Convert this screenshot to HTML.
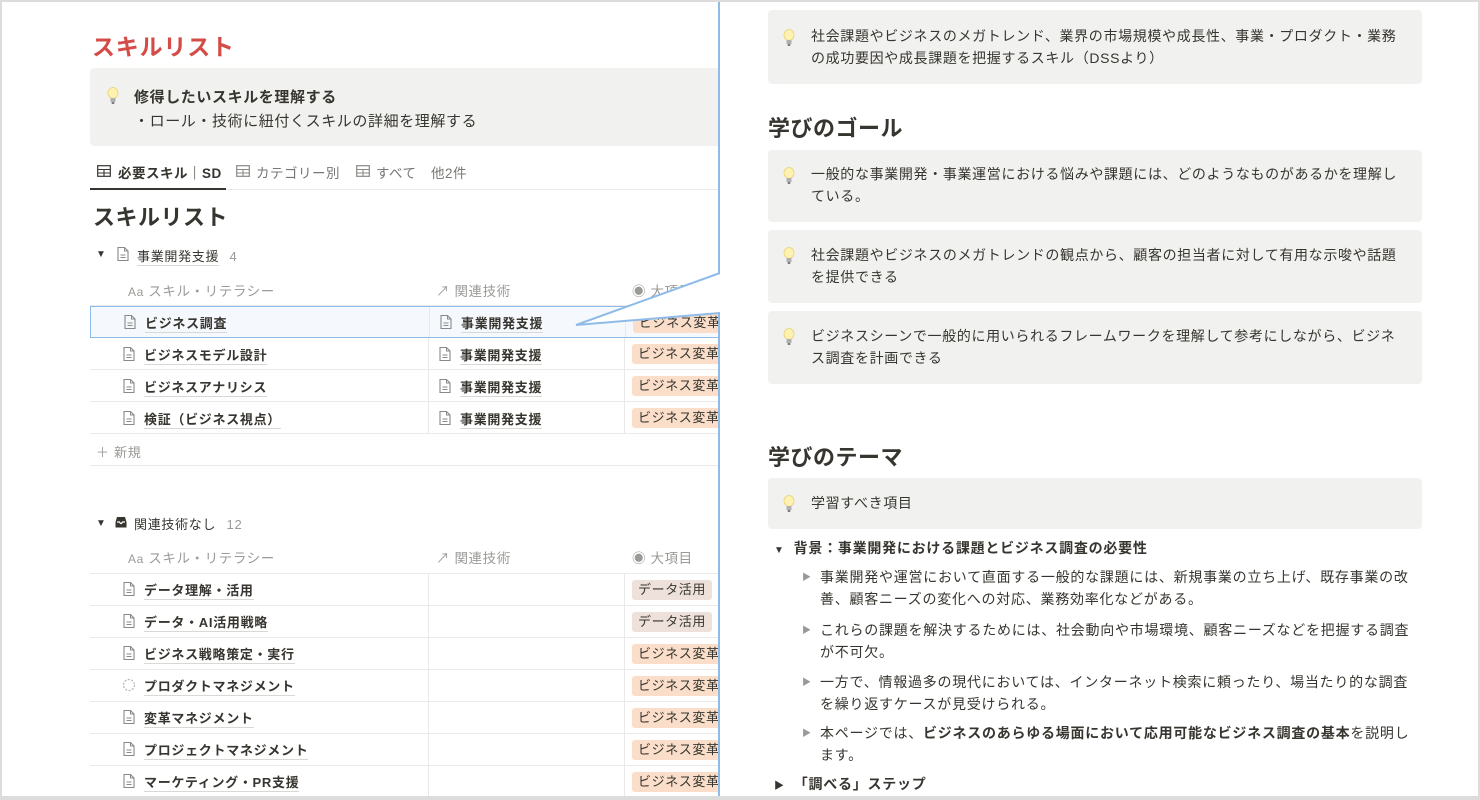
<!DOCTYPE html>
<html><head><meta charset="utf-8">
<style>
*{margin:0;padding:0;box-sizing:border-box}
body{width:1480px;height:800px;overflow:hidden;background:#fff;font-family:"Liberation Sans","Noto Sans CJK JP",sans-serif;color:#37352f;position:relative}
.a{position:absolute;white-space:nowrap}
#frame{position:absolute;left:0;top:0;width:1480px;height:800px;border:2px solid #dcdcdc;border-bottom:4px solid #dcdcdc;pointer-events:none;z-index:20}
#left{position:absolute;left:0;top:0;width:718px;height:800px;overflow:hidden}
.callout{position:absolute;background:#f1f1ef;border-radius:4px}
.t13{font-size:13px;letter-spacing:0.7px}
.row{position:absolute;left:90px;width:700px;height:32px;border-bottom:1px solid #e9e9e7}
.c1{position:absolute;left:338px;top:0;height:100%;border-left:1px solid #e9e9e7}
.c2{position:absolute;left:534px;top:0;height:100%;border-left:1px solid #e9e9e7}
.ul{border-bottom:1px solid #d8d8d5;font-weight:bold;padding-bottom:1px}
.tag{position:absolute;left:542px;top:6px;height:20px;padding:0 6px;border-radius:3px;font-size:13px;letter-spacing:0.6px;line-height:20px;width:120px}
.biz{background:#fadec9}
.dat{background:#eee0da}
#right{position:absolute;left:718px;top:0;width:762px;height:800px;background:#fff;border-left:2px solid #8fbbe8}
.rc{position:absolute;left:48px;width:654px;background:#f1f1ef;border-radius:4px}
.rt{position:absolute;left:43px;font-size:14px;letter-spacing:0.65px;line-height:22px;white-space:nowrap}
.bulb{position:absolute;width:12px;height:18px}
h2{position:absolute;left:48px;font-size:22px;font-weight:bold;letter-spacing:0.5px}
.li{position:absolute;left:100px;font-size:14px;letter-spacing:0.75px;line-height:22px;white-space:nowrap}
.tri{position:absolute;left:-18px;top:0;font-size:9px;color:#999}
</style></head><body>
<svg width="0" height="0" style="position:absolute">
<defs>
<symbol id="doc" viewBox="0 0 14 16"><path d="M2 1.5h6.5l3.5 3.5v9.5H2z" fill="none" stroke="#8a8985" stroke-width="1.1"/><path d="M8.5 1.5v3.5H12M4.5 9h5M4.5 11.5h5" fill="none" stroke="#8a8985" stroke-width="1"/></symbol>
<symbol id="bulb" viewBox="0 0 12 18"><ellipse cx="6" cy="6" rx="5" ry="5.5" fill="#fff2b0" stroke="#e6d27a" stroke-width="0.8"/><rect x="3.5" y="11" width="5" height="4" fill="#b0b0b0"/><rect x="4.5" y="15" width="3" height="2" rx="1" fill="#777"/></symbol>
<symbol id="tbl" viewBox="0 0 14 12"><rect x="0.7" y="0.7" width="12.6" height="10.6" fill="none" stroke="currentColor" stroke-width="1.2"/><path d="M0.7 4.5h12.6M0.7 8h12.6M7 4.5v7" stroke="currentColor" stroke-width="1.1"/></symbol>
</defs></svg>

<div id="left">
<div class="a" style="left:92px;top:28px;font-size:23px;font-weight:bold;color:#d44c47;letter-spacing:0.8px">スキルリスト</div>
<div class="callout" style="left:90px;top:68px;width:700px;height:78px"></div>
<svg class="bulb" style="left:107px;top:87px"><use href="#bulb"/></svg>
<div class="a" style="left:134px;top:86px;font-size:15px;font-weight:bold;letter-spacing:0.6px">修得したいスキルを理解する</div>
<div class="a" style="left:134px;top:110px;font-size:15px;letter-spacing:0.6px">・ロール・技術に紐付くスキルの詳細を理解する</div>

<svg class="a" style="left:97px;top:165px;color:#37352f" width="14" height="12"><use href="#tbl"/></svg>
<div class="a" style="left:118px;top:162px;font-size:13.5px;letter-spacing:0.5px;font-weight:bold">必要スキル｜SD</div>
<svg class="a" style="left:236px;top:165px;color:#8a8985" width="14" height="12"><use href="#tbl"/></svg>
<div class="a" style="left:256px;top:162px;font-size:13.5px;letter-spacing:0.5px;color:#787774">カテゴリー別</div>
<svg class="a" style="left:356px;top:165px;color:#8a8985" width="14" height="12"><use href="#tbl"/></svg>
<div class="a" style="left:376px;top:162px;font-size:13.5px;letter-spacing:0.5px;color:#787774">すべて</div>
<div class="a" style="left:431px;top:162px;font-size:13.5px;letter-spacing:0.5px;color:#787774">他2件</div>
<div class="a" style="left:90px;top:189px;width:700px;border-top:1px solid #e9e9e7"></div>
<div class="a" style="left:90px;top:188px;width:136px;border-top:2px solid #37352f"></div>
<div class="a" style="left:93px;top:200px;font-size:22px;font-weight:bold;letter-spacing:0.5px">スキルリスト</div>

<div class="a" style="left:96px;top:249px;font-size:10px">▼</div>
<svg class="a" style="left:116px;top:246px" width="14" height="16"><use href="#doc"/></svg>
<div class="a t13" style="left:137px;top:246px"><span class="ul" style="font-weight:normal">事業開発支援</span> <span style="color:#9b9a97;margin-left:6px">4</span></div>

<div class="a" style="left:128px;top:280px;font-size:13.5px;color:#9b9a97;letter-spacing:0.6px"><span style="font-size:12px">Aa</span> スキル・リテラシー</div>
<div class="a" style="left:436px;top:280px;font-size:13.5px;color:#9b9a97;letter-spacing:0.6px">↗ 関連技術</div>
<div class="a" style="left:632px;top:280px;font-size:13.5px;color:#9b9a97;letter-spacing:0.6px">◉ 大項目</div>
<div class="a" style="left:90px;top:305px;width:700px;border-top:1px solid #e9e9e7"></div>

<div class="row" style="top:306px;background:#f5f9fd;border:1px solid #8fbbe8;height:32px"><div class="c1"></div><div class="c2"></div>
<svg class="a" style="left:32px;top:7px" width="14" height="16"><use href="#doc"/></svg><div class="a t13" style="left:54px;top:6px"><span class="ul">ビジネス調査</span></div>
<svg class="a" style="left:348px;top:7px" width="14" height="16"><use href="#doc"/></svg><div class="a t13" style="left:370px;top:6px"><span class="ul">事業開発支援</span></div>
<div class="tag biz">ビジネス変革</div></div>
<div class="row" style="top:338px"><div class="c1"></div><div class="c2"></div>
<svg class="a" style="left:32px;top:8px" width="14" height="16"><use href="#doc"/></svg><div class="a t13" style="left:54px;top:7px"><span class="ul">ビジネスモデル設計</span></div>
<svg class="a" style="left:348px;top:8px" width="14" height="16"><use href="#doc"/></svg><div class="a t13" style="left:370px;top:7px"><span class="ul">事業開発支援</span></div>
<div class="tag biz">ビジネス変革</div></div>
<div class="row" style="top:370px"><div class="c1"></div><div class="c2"></div>
<svg class="a" style="left:32px;top:8px" width="14" height="16"><use href="#doc"/></svg><div class="a t13" style="left:54px;top:7px"><span class="ul">ビジネスアナリシス</span></div>
<svg class="a" style="left:348px;top:8px" width="14" height="16"><use href="#doc"/></svg><div class="a t13" style="left:370px;top:7px"><span class="ul">事業開発支援</span></div>
<div class="tag biz">ビジネス変革</div></div>
<div class="row" style="top:402px"><div class="c1"></div><div class="c2"></div>
<svg class="a" style="left:32px;top:8px" width="14" height="16"><use href="#doc"/></svg><div class="a t13" style="left:54px;top:7px"><span class="ul">検証（ビジネス視点）</span></div>
<svg class="a" style="left:348px;top:8px" width="14" height="16"><use href="#doc"/></svg><div class="a t13" style="left:370px;top:7px"><span class="ul">事業開発支援</span></div>
<div class="tag biz">ビジネス変革</div></div>
<div class="row" style="top:434px"><div class="a t13" style="left:6px;top:8px;color:#9b9a97">＋ 新規</div></div>

<div class="a" style="left:96px;top:518px;font-size:10px">▼</div>
<svg class="a" style="left:114px;top:515px" width="14" height="14" viewBox="0 0 14 14"><path d="M1.5 7L3 2h8l1.5 5v5.5h-11z" fill="#37352f"/><path d="M3 7h2.5l1 1.5h1l1-1.5H11" fill="none" stroke="#fff" stroke-width="1.2"/></svg>
<div class="a t13" style="left:134px;top:514px">関連技術なし <span style="color:#9b9a97;margin-left:6px">12</span></div>
<div class="a" style="left:128px;top:547px;font-size:13.5px;color:#9b9a97;letter-spacing:0.6px"><span style="font-size:12px">Aa</span> スキル・リテラシー</div>
<div class="a" style="left:436px;top:547px;font-size:13.5px;color:#9b9a97;letter-spacing:0.6px">↗ 関連技術</div>
<div class="a" style="left:632px;top:547px;font-size:13.5px;color:#9b9a97;letter-spacing:0.6px">◉ 大項目</div>
<div class="a" style="left:90px;top:573px;width:700px;border-top:1px solid #e9e9e7"></div>

<div class="row" style="top:574px"><div class="c1"></div><div class="c2"></div><svg class="a" style="left:32px;top:7px" width="14" height="16"><use href="#doc"/></svg><div class="a t13" style="left:54px;top:6px"><span class="ul">データ理解・活用</span></div><div class="tag dat" style="width:auto">データ活用</div></div>
<div class="row" style="top:606px"><div class="c1"></div><div class="c2"></div><svg class="a" style="left:32px;top:7px" width="14" height="16"><use href="#doc"/></svg><div class="a t13" style="left:54px;top:6px"><span class="ul">データ・AI活用戦略</span></div><div class="tag dat" style="width:auto">データ活用</div></div>
<div class="row" style="top:638px"><div class="c1"></div><div class="c2"></div><svg class="a" style="left:32px;top:7px" width="14" height="16"><use href="#doc"/></svg><div class="a t13" style="left:54px;top:6px"><span class="ul">ビジネス戦略策定・実行</span></div><div class="tag biz">ビジネス変革</div></div>
<div class="row" style="top:670px"><div class="c1"></div><div class="c2"></div><svg class="a" style="left:32px;top:8px" width="14" height="14" viewBox="0 0 14 14"><circle cx="7" cy="7" r="5.5" fill="none" stroke="#b5b4b0" stroke-width="1.2" stroke-dasharray="2 1.5"/></svg><div class="a t13" style="left:54px;top:6px"><span class="ul">プロダクトマネジメント</span></div><div class="tag biz">ビジネス変革</div></div>
<div class="row" style="top:702px"><div class="c1"></div><div class="c2"></div><svg class="a" style="left:32px;top:7px" width="14" height="16"><use href="#doc"/></svg><div class="a t13" style="left:54px;top:6px"><span class="ul">変革マネジメント</span></div><div class="tag biz">ビジネス変革</div></div>
<div class="row" style="top:734px"><div class="c1"></div><div class="c2"></div><svg class="a" style="left:32px;top:7px" width="14" height="16"><use href="#doc"/></svg><div class="a t13" style="left:54px;top:6px"><span class="ul">プロジェクトマネジメント</span></div><div class="tag biz">ビジネス変革</div></div>
<div class="row" style="top:766px"><div class="c1"></div><div class="c2"></div><svg class="a" style="left:32px;top:7px" width="14" height="16"><use href="#doc"/></svg><div class="a t13" style="left:54px;top:6px"><span class="ul">マーケティング・PR支援</span></div><div class="tag biz">ビジネス変革</div></div>
</div>

<div id="right">
<div class="rc" style="top:10px;height:74px"><svg class="bulb" style="left:15px;top:19px"><use href="#bulb"/></svg><div class="rt" style="top:15px">社会課題やビジネスのメガトレンド、業界の市場規模や成長性、事業・プロダクト・業務<br>の成功要因や成長課題を把握するスキル（DSSより）</div></div>
<h2 style="top:111px">学びのゴール</h2>
<div class="rc" style="top:150px;height:72px"><svg class="bulb" style="left:15px;top:17px"><use href="#bulb"/></svg><div class="rt" style="top:13px">一般的な事業開発・事業運営における悩みや課題には、どのようなものがあるかを理解し<br>ている。</div></div>
<div class="rc" style="top:230px;height:73px"><svg class="bulb" style="left:15px;top:17px"><use href="#bulb"/></svg><div class="rt" style="top:14px">社会課題やビジネスのメガトレンドの観点から、顧客の担当者に対して有用な示唆や話題<br>を提供できる</div></div>
<div class="rc" style="top:311px;height:73px"><svg class="bulb" style="left:15px;top:17px"><use href="#bulb"/></svg><div class="rt" style="top:14px">ビジネスシーンで一般的に用いられるフレームワークを理解して参考にしながら、ビジネ<br>ス調査を計画できる</div></div>
<h2 style="top:440px">学びのテーマ</h2>
<div class="rc" style="top:478px;height:51px"><svg class="bulb" style="left:15px;top:17px"><use href="#bulb"/></svg><div class="rt" style="top:14px">学習すべき項目</div></div>
<div class="li" style="left:54px;top:537px;font-weight:bold"><span style="font-size:10px;margin-right:9px">▼</span>背景：事業開発における課題とビジネス調査の必要性</div>
<div class="li" style="top:566px"><span class="tri">▶</span>事業開発や運営において直面する一般的な課題には、新規事業の立ち上げ、既存事業の改<br>善、顧客ニーズの変化への対応、業務効率化などがある。</div>
<div class="li" style="top:619px"><span class="tri">▶</span>これらの課題を解決するためには、社会動向や市場環境、顧客ニーズなどを把握する調査<br>が不可欠。</div>
<div class="li" style="top:671px"><span class="tri">▶</span>一方で、情報過多の現代においては、インターネット検索に頼ったり、場当たり的な調査<br>を繰り返すケースが見受けられる。</div>
<div class="li" style="top:722px"><span class="tri">▶</span>本ページでは、<b>ビジネスのあらゆる場面において応用可能なビジネス調査の基本</b>を説明し<br>ます。</div>
<div class="li" style="left:54px;top:773px;font-weight:bold"><span style="font-size:10px;margin-right:9px">▶</span>「調べる」ステップ</div>
</div>

<svg class="a" style="left:0;top:0;z-index:10" width="722" height="340"><polygon points="576,325 720,273 720,313" fill="#fff"/><polyline points="720,273 576,325 720,313" fill="none" stroke="#8fbbe8" stroke-width="2"/></svg>
<div id="frame"></div>
</body></html>
